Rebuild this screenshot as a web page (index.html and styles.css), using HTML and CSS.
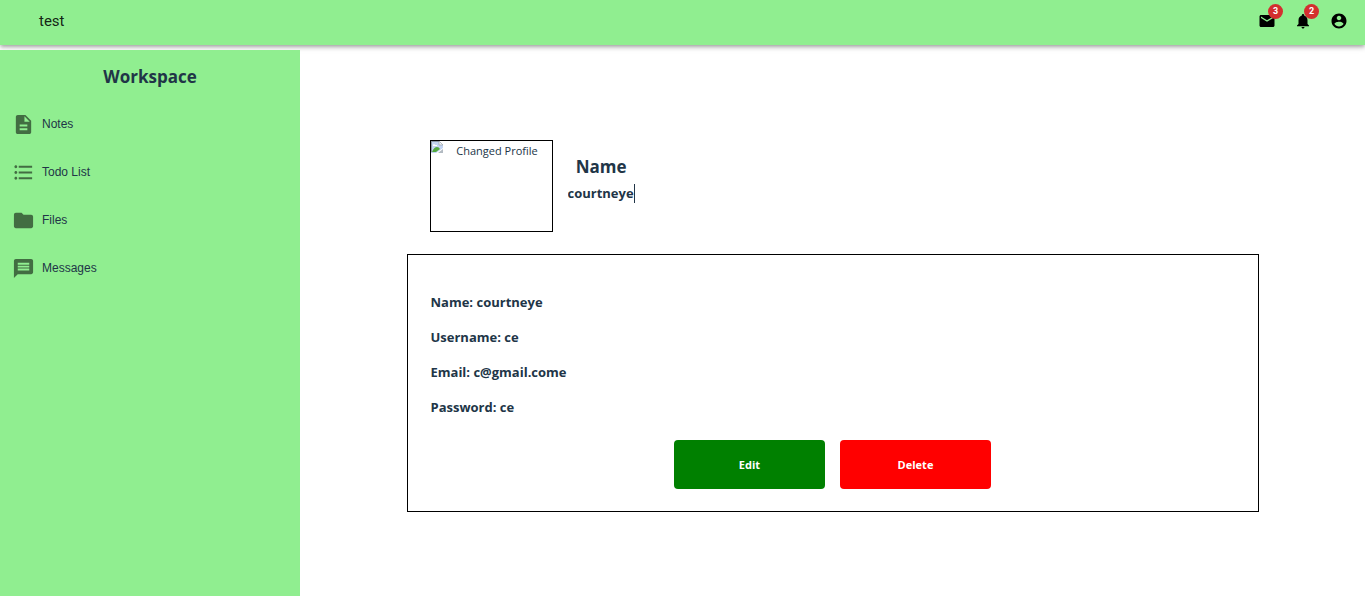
FILE: index.html
```html
<!DOCTYPE html>
<html lang="en">
<head>
<meta charset="utf-8">
<meta name="viewport" content="width=device-width, initial-scale=1">
<title>test</title>
<link rel="stylesheet" href="styles.css">
</head>
<body>
<header class="topbar">
  <a class="brand" href="#">test</a>
  <nav class="actions" aria-label="Account">
    <button class="icon-button" type="button" aria-label="Messages">
      <svg class="icon" viewBox="0 0 24 24"><path d="M20 4H4c-1.100 0-1.990.9-1.990 2L2 18c0 1.100.9 2 2 2h16c1.100 0 2-.9 2-2V6c0-1.100-.9-2-2-2zm0 4l-8 5-8-5V6l8 5 8-5v2z"/></svg>
      <span class="badge">3</span>
    </button>
    <button class="icon-button" type="button" aria-label="Notifications">
      <svg class="icon" viewBox="0 0 24 24"><path d="M12 22c1.100 0 2-.9 2-2h-4c0 1.100.89 2 2 2zm6-6v-5c0-3.070-1.640-5.640-4.500-6.320V4c0-.83-.67-1.500-1.500-1.500s-1.500.67-1.500 1.500v.68C7.630 5.360 6 7.920 6 11v5l-2 2v1h16v-1l-2-2z"/></svg>
      <span class="badge">2</span>
    </button>
    <button class="icon-button" type="button" aria-label="Account">
      <svg class="icon" viewBox="0 0 24 24"><path d="M12 2C6.480 2 2 6.480 2 12s4.480 10 10 10 10-4.480 10-10S17.520 2 12 2zm0 3c1.660 0 3 1.340 3 3s-1.340 3-3 3-3-1.340-3-3 1.340-3 3-3zm0 14.200c-2.500 0-4.710-1.280-6-3.220.03-1.990 4-3.080 6-3.080 1.990 0 5.970 1.090 6 3.080-1.290 1.940-3.500 3.220-6 3.220z"/></svg>
    </button>
  </nav>
</header>
<div class="layout">
  <aside class="sidebar">
    <h2 class="sidebar-title">Workspace</h2>
    <nav class="menu" aria-label="Workspace">
      <a class="menu-item" href="#"><svg class="menu-icon" viewBox="0 0 24 24"><path d="M14 2H6c-1.100 0-1.990.9-1.990 2L4 20c0 1.100.89 2 1.990 2H18c1.100 0 2-.9 2-2V8l-6-6zm2 16H8v-2h8v2zm0-4H8v-2h8v2zm-3-5V3.500L18.500 9H13z"/></svg>Notes</a>
      <a class="menu-item" href="#"><svg class="menu-icon" viewBox="0 0 24 24"><path d="M4 10.500c-.83 0-1.500.67-1.500 1.500s.67 1.500 1.500 1.500 1.500-.67 1.500-1.500-.67-1.500-1.500-1.500zm0-6c-.83 0-1.500.67-1.500 1.500S3.170 7.500 4 7.500 5.500 6.830 5.500 6 4.830 4.500 4 4.500zm0 12c-.83 0-1.500.68-1.500 1.500s.68 1.500 1.500 1.500 1.500-.68 1.500-1.500-.67-1.500-1.500-1.500zM7 19h14v-2H7v2zm0-6h14v-2H7v2zm0-8v2h14V5H7z"/></svg>Todo List</a>
      <a class="menu-item" href="#"><svg class="menu-icon" viewBox="0 0 24 24"><path d="M10 4H4c-1.100 0-1.990.9-1.990 2L2 18c0 1.100.9 2 2 2h16c1.100 0 2-.9 2-2V8c0-1.100-.9-2-2-2h-8l-2-2z"/></svg>Files</a>
      <a class="menu-item" href="#"><svg class="menu-icon" viewBox="0 0 24 24"><path d="M20 2H4c-1.100 0-1.990.9-1.990 2L2 22l4-4h14c1.100 0 2-.9 2-2V4c0-1.100-.9-2-2-2zm-2 12H6v-2h12v2zm0-3H6V9h12v2zm0-3H6V6h12v2z"/></svg>Messages</a>
    </nav>
  </aside>
  <main class="content">
    <section class="profile">
      <div class="photo">
        <svg class="photo-icon" viewBox="0 0 12 12"><path d="M0 0h8l4 4v3l-7 5H0z" fill="#c3d4f2"/><path d="M0 0h8v1H1v10H0z" fill="#8c99a8"/><path d="M2 4q1-2 2 0h2v1H2z" fill="#fff"/><path d="M1 11q2-5 5-5 2 0 3 2l-4 3z" fill="#53a93f"/><path d="M8 0l4 4H8z" fill="#f5f5f5" stroke="#9aa3ad" stroke-width=".7"/><path d="M12 8v4H7z" fill="#b2bac2"/></svg>
        <span class="photo-text">Changed Profile</span>
      </div>
      <div class="identity">
        <label class="identity-label" for="name">Name</label>
        <input class="identity-input" id="name" type="text" value="courtneye">
      </div>
    </section>
    <section class="card">
      <h4 class="detail">Name: courtneye</h4>
      <h4 class="detail">Username: ce</h4>
      <h4 class="detail">Email: c@gmail.come</h4>
      <h4 class="detail">Password: ce</h4>
      <div class="buttons">
        <button class="button edit" type="button">Edit</button>
        <button class="button delete" type="button">Delete</button>
      </div>
    </section>
  </main>
</div>
</body>
</html>
```
FILE: styles.css
```css
* {
  box-sizing: border-box;
}

body {
  margin: 0;
  min-height: 100vh;
  display: flex;
  flex-direction: column;
  gap: 5px;
  background: #fff;
  color: #213547;
  font-family: "Open Sans", "Noto Sans", sans-serif;
  font-size: 12px;
}

.topbar {
  display: flex;
  align-items: center;
  justify-content: space-between;
  padding: 0 17px 3px 39px;
  min-height: 45px;
  background: lightgreen;
  box-shadow: 0 2px 3px -1px rgba(0, 0, 0, 0.2), 0 3px 4px rgba(0, 0, 0, 0.14), 0 1px 8px rgba(0, 0, 0, 0.12);
}

.brand {
  color: rgba(0, 0, 0, 0.87);
  font-family: Roboto, sans-serif;
  font-size: 15px;
  text-decoration: none;
}

.actions {
  display: flex;
  gap: 18px;
}

.icon-button {
  position: relative;
  display: flex;
  padding: 0;
  border: 0;
  background: none;
  color: #000;
}

.icon {
  width: 18px;
  height: 18px;
  fill: currentColor;
}

.badge {
  position: absolute;
  top: -8px;
  right: -7px;
  width: 15px;
  height: 15px;
  border-radius: 50%;
  background: #d32f2f;
  color: #fff;
  font: 700 9px/15px Roboto, sans-serif;
  text-align: center;
}

.layout {
  display: flex;
  flex: 1;
}

.sidebar {
  flex: 0 0 300px;
  padding-top: 15px;
  background: lightgreen;
}

.sidebar-title {
  margin: 0 0 11px;
  font-size: 17px;
  line-height: 24px;
  text-align: center;
}

.menu-item {
  display: flex;
  align-items: center;
  gap: 7px;
  height: 48px;
  padding-left: 12px;
  color: #213547;
  font-family: "Liberation Sans", Arial, sans-serif;
  text-decoration: none;
}

.menu-icon {
  width: 23px;
  height: 23px;
  fill: rgba(0, 0, 0, 0.54);
}

.content {
  flex: 1;
  padding-top: 90px;
}

.profile,
.card {
  width: 80%;
  margin: 0 auto;
}

.profile {
  display: flex;
  gap: 15px;
  padding-left: 23px;
}

.photo {
  display: flex;
  align-items: flex-start;
  width: 123px;
  height: 92px;
  border: 1px solid #000;
}

.photo-icon {
  width: 12px;
  height: 12px;
}

.photo-text {
  flex: 1;
  font-size: 11px;
  line-height: 20px;
  text-align: center;
}

.identity {
  display: flex;
  flex-direction: column;
  align-items: center;
  gap: 5px;
  padding-top: 15px;
  font-weight: 700;
}

.identity-label {
  font-size: 17px;
  line-height: 24px;
}

.identity-input {
  field-sizing: content;
  height: 19px;
  padding: 0;
  border: 0;
  border-right: 1px solid #213547;
  outline: 0;
  background: none;
  color: inherit;
  font: 700 13px/19px "Open Sans", "Noto Sans", sans-serif;
}

.card {
  margin-top: 22px;
  padding: 38px 23px 22px;
  border: 1px solid #000;
}

.detail {
  margin: 0 0 17px;
  font-size: 13px;
  line-height: 18px;
}

.buttons {
  display: flex;
  justify-content: center;
  gap: 15px;
  margin-top: 24px;
}

.button {
  width: 151px;
  height: 49px;
  padding: 0;
  border: 0;
  border-radius: 4px;
  color: #fff;
  font: 700 11px "Open Sans", "Noto Sans", sans-serif;
}

.edit {
  background: green;
}

.delete {
  background: red;
}
```
